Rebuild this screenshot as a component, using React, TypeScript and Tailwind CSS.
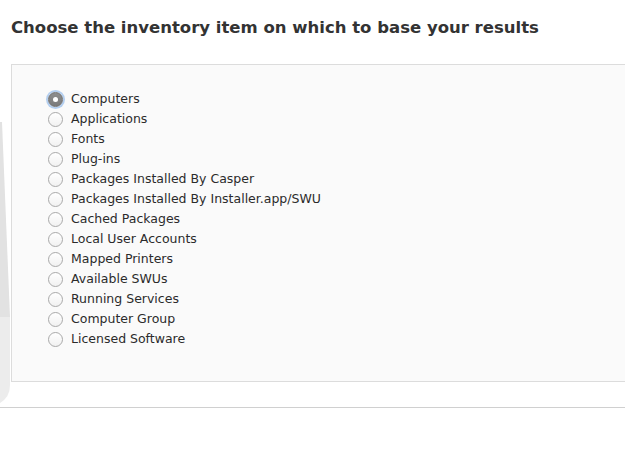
import React, { useState } from 'react';

const items = [
  'Computers',
  'Applications',
  'Fonts',
  'Plug-ins',
  'Packages Installed By Casper',
  'Packages Installed By Installer.app/SWU',
  'Cached Packages',
  'Local User Accounts',
  'Mapped Printers',
  'Available SWUs',
  'Running Services',
  'Computer Group',
  'Licensed Software',
];

const Radio: React.FC<{ checked: boolean }> = ({ checked }) =>
  checked ? (
    <span className="relative flex h-[15px] w-[15px] shrink-0 items-center justify-center rounded-full border border-[#6f6f6f] bg-gradient-to-b from-[#8e8e8e] to-[#7a7a7a] shadow-[0_0_0_2px_rgba(120,170,230,0.55)]">
      <span className="h-[5px] w-[5px] rounded-full bg-white" />
    </span>
  ) : (
    <span className="h-[15px] w-[15px] shrink-0 rounded-full border border-[#a9a9a9] bg-gradient-to-b from-white to-[#f1f1f1]" />
  );

export default function App() {
  const [selected, setSelected] = useState('Computers');

  return (
    <div className="relative h-[451px] w-[625px] overflow-hidden bg-white font-['DejaVu_Sans',sans-serif] text-[#333]">
      {/* faint shadow wedge at the left edge */}
      <svg className="absolute left-0 top-[110px]" width="12" height="295" viewBox="0 0 12 295">
        <polygon points="0,12 2,12 10,207 0,207" fill="#e2e2e2" />
        <path d="M0,207 H10 V275 Q10,287 0,293 Z" fill="#ececec" />
      </svg>

      <h1 className="px-[11px] pt-[17px] text-[16.5px] font-bold leading-[22px] text-[#333]">
        Choose the inventory item on which to base your results
      </h1>

      <div className="relative ml-[11px] mt-[25px] border-y border-l border-[#dcdcdc] bg-[#fafafa] pb-[32px] pl-[36px] pt-[24px]">
        {items.map(item => (
          <label
            key={item}
            onClick={() => setSelected(item)}
            className="flex h-[20px] cursor-pointer items-center gap-[8px]"
          >
            <Radio checked={selected === item} />
            <span className="text-[12.5px] leading-[20px] text-[#2b2b2b]">{item}</span>
          </label>
        ))}
      </div>

      <div className="mt-[25px] border-t border-[#d0d0d0]" />
    </div>
  );
}
